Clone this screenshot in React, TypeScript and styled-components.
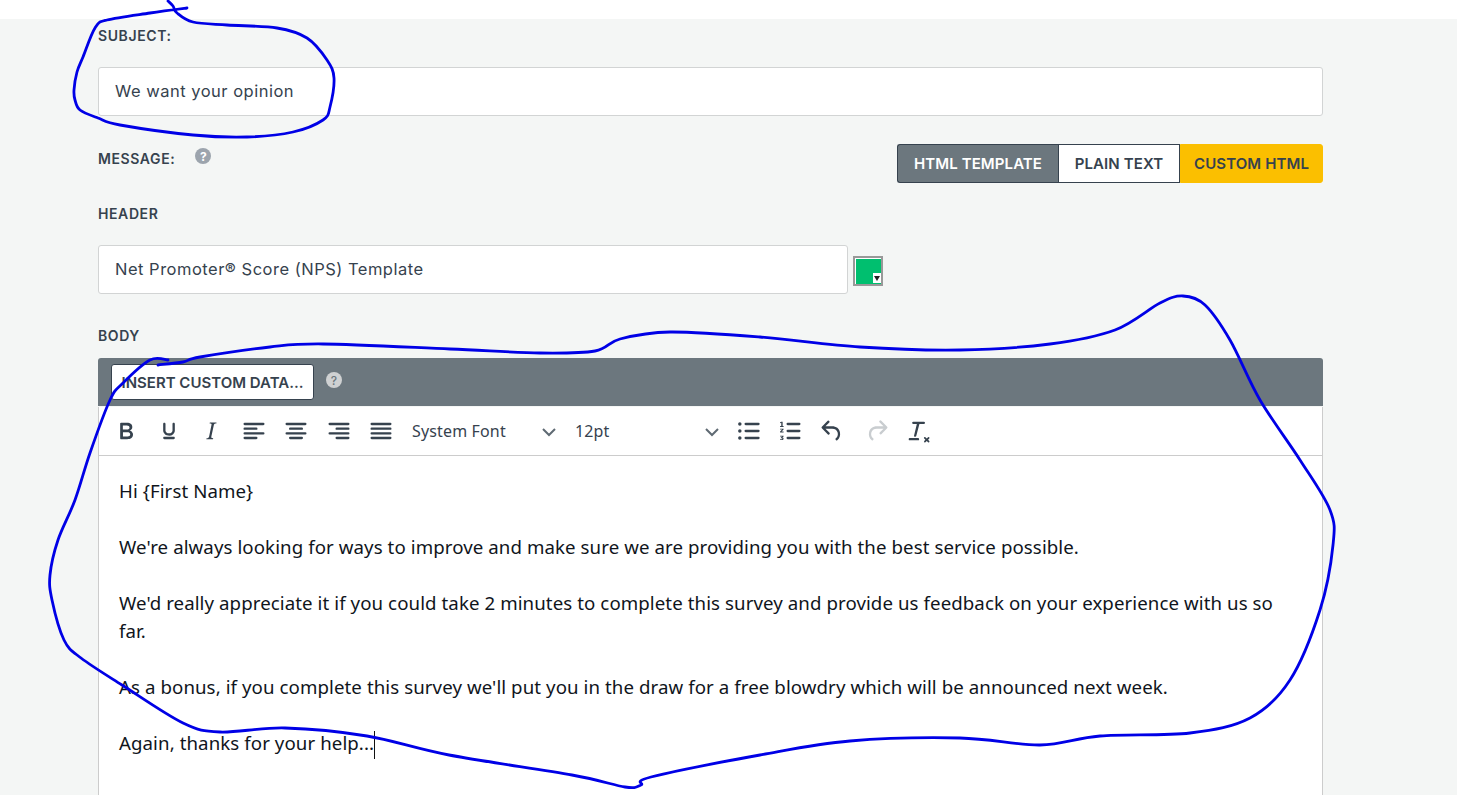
import React from 'react';
import styled, { createGlobalStyle } from 'styled-components';

const GlobalStyle = createGlobalStyle`
    html, body {
        margin: 0;
        padding: 0;
        height: 795px;
        overflow: hidden;
        background-color: #fff;
    }
`
const uiFont = `Inter, "Noto Sans", sans-serif`;
const bodyFont = `"Noto Sans", "Open Sans", sans-serif`;

const Root = styled.div`
    position: relative;
    height: 795px;
    overflow: hidden;
`
const TopStrip = styled.div`
    height: 19px;
    background-color: #fff;
`
const Page = styled.div`
    height: 776px;
    overflow: hidden;
    box-sizing: border-box;
    padding: 0 134px 0 98px;
    background-color: #f4f6f5;
    font-family: ${uiFont};
    color: #36424e;
`
const Label = styled.div<{ $top: number }>`
    display: flex;
    align-items: center;
    height: 16px;
    margin-top: ${p => p.$top}px;
    font-size: 14px;
    font-weight: 600;
    letter-spacing: 0.6px;
    line-height: 16px;
`
const TextInput = styled.div<{ $width?: number }>`
    box-sizing: border-box;
    display: flex;
    align-items: center;
    width: ${p => (p.$width ? `${p.$width}px` : '100%')};
    height: 49px;
    padding: 0 16px 2px;
    background-color: #fff;
    border: 1px solid #d2d4d4;
    border-radius: 3px;
    font-size: 16.5px;
    letter-spacing: 0.5px;
`
const SubjectField = styled.div`
    margin-top: 23px;
`
const MessageRow = styled.div`
    display: flex;
    justify-content: space-between;
    margin-top: 28px;
    height: 39px;
`
const MessageLabel = styled.div`
    display: flex;
    height: 28px;
    align-items: center;
    gap: 20px;
    font-size: 14px;
    font-weight: 600;
    letter-spacing: 0.6px;
`
const Help = styled.span<{ $light?: boolean }>`
    display: inline-flex;
    align-items: center;
    justify-content: center;
    width: 16px;
    height: 16px;
    border-radius: 50%;
    font-size: 12px;
    font-weight: ${p => (p.$light ? 500 : 700)};
    letter-spacing: 0;
    background-color: ${p => (p.$light ? '#cfd1d2' : '#9ca4ad')};
    color: ${p => (p.$light ? '#6c777e' : '#fff')};
    position: relative;
    top: -2px;
`
const Segments = styled.div`
    display: flex;
    height: 39px;
    font-size: 15px;
    font-weight: 600;
    letter-spacing: 0.1px;
`
const Segment = styled.div<{ $kind: 'active' | 'plain' | 'custom' }>`
    box-sizing: border-box;
    display: flex;
    align-items: center;
    justify-content: center;
    height: 39px;
    width: ${p => (p.$kind === 'active' ? 161 : p.$kind === 'plain' ? 122 : 143)}px;
    border: 1px solid ${p => (p.$kind === 'custom' ? '#fbbf00' : '#36424e')};
    border-right-width: ${p => (p.$kind === 'active' ? 0 : 1)}px;
    background-color: ${p => (p.$kind === 'active' ? '#6c777e' : p.$kind === 'plain' ? '#fff' : '#fbbf00')};
    color: ${p => (p.$kind === 'active' ? '#fff' : '#36424e')};
    border-radius: ${p => (p.$kind === 'active' ? '3px 0 0 3px' : p.$kind === 'custom' ? '0 3px 3px 0' : '0')};
`
const HeaderField = styled.div`
    display: flex;
    align-items: center;
    gap: 5px;
    margin-top: 23px;
`
const Swatch = styled.div`
    position: relative;
    box-sizing: border-box;
    width: 30px;
    height: 30px;
    margin-top: 3px;
    padding: 1px 0 1px 1px;
    border: 2px solid #999;
    background-color: #fff;
`
const SwatchFill = styled.div`
    width: 25px;
    height: 25px;
    background-color: #00bf6f;
`
const SwatchCorner = styled.div`
    position: absolute;
    right: 0;
    bottom: 1px;
    width: 8px;
    height: 10px;
    background-color: #fff;
    &::after {
        content: '';
        position: absolute;
        left: 1px;
        top: 3px;
        border-left: 3px solid transparent;
        border-right: 3px solid transparent;
        border-top: 5px solid #222;
    }
`
const EditorBar = styled.div`
    display: flex;
    align-items: center;
    gap: 12px;
    height: 48px;
    margin-top: 14px;
    padding-left: 13px;
    background-color: #6c777e;
    border-radius: 3px 3px 0 0;
`
const InsertButton = styled.div`
    box-sizing: border-box;
    display: flex;
    align-items: center;
    justify-content: center;
    width: 203px;
    height: 36px;
    background-color: #fff;
    border: 1px solid #36424e;
    border-radius: 3px;
    font-size: 15px;
    font-weight: 600;
`
const Editor = styled.div`
    height: 389px;
    margin-top: 1px;
    background-color: #fff;
    border: 1px solid #ccc;
    border-top: 0;
    border-bottom: 0;
`
const Toolbar = styled.div`
    display: flex;
    align-items: center;
    height: 48px;
    padding-left: 13px;
    border-bottom: 1px solid #ccc;
`
const ToolIcon = styled.svg<{ $muted?: boolean; $gap?: number }>`
    flex: none;
    width: 28px;
    height: 28px;
    margin-right: ${p => p.$gap ?? 14.5}px;
    fill: ${p => (p.$muted ? '#c9cdd0' : '#36424e')};
`
const Select = styled.div<{ $width: number; $pad: number }>`
    flex: none;
    display: flex;
    align-items: center;
    justify-content: space-between;
    box-sizing: border-box;
    width: ${p => p.$width}px;
    padding-right: ${p => p.$pad}px;
    font-family: ${bodyFont};
    font-size: 16px;
    letter-spacing: 0.15px;
    color: #36424e;
`
const Chevron = styled.svg`
    width: 14px;
    height: 10px;
    margin-top: 1px;
    fill: none;
    stroke: #5f6a73;
    stroke-width: 2;
`
const Content = styled.div`
    padding: 21px 25px 0 20px;
    font-family: ${bodyFont};
    font-size: 18.67px;
    letter-spacing: 0.085px;
    line-height: 28px;
    color: #10151c;
`
const Para = styled.p`
    margin: 0 0 28px;
`
const Caret = styled.span`
    display: inline-block;
    width: 1px;
    height: 28px;
    margin-bottom: -9px;
    background-color: #111;
`
const Scribble = styled.svg`
    position: absolute;
    top: 0;
    left: 0;
    width: 1457px;
    height: 795px;
    pointer-events: none;
    fill: none;
    stroke: #0000e6;
    stroke-width: 2.8;
    stroke-linecap: round;
    stroke-linejoin: round;
`

const icons: { [key: string]: string } = {
    bold: 'M7.8 19c-.3 0-.5 0-.6-.2l-.2-.5V5.7c0-.2 0-.4.2-.5l.6-.2h5c1.5 0 2.7.3 3.5 1 .7.6 1.1 1.4 1.1 2.5a3 3 0 0 1-.6 1.9c-.4.6-1 1-1.6 1.2.4.1.9.3 1.3.6s.8.7 1 1.2c.4.4.5 1 .5 1.6 0 1.3-.4 2.3-1.3 3-.8.7-2.1 1-3.8 1H7.8zm5-8.3c.6 0 1.2-.1 1.6-.5.4-.3.6-.7.6-1.3 0-1.1-.8-1.7-2.3-1.7H9.3v3.5h3.4zm.5 6c.7 0 1.3-.1 1.7-.4.4-.4.6-.9.6-1.5s-.2-1-.7-1.4c-.4-.3-1-.4-2-.4H9.4v3.8h4z',
    underline: 'M16 5c.6 0 1 .4 1 1v5.5a4 4 0 0 1-.4 1.8l-1 1.4a5.3 5.3 0 0 1-5.5 1 5 5 0 0 1-1.6-1c-.5-.4-.8-.9-1.1-1.4a4 4 0 0 1-.4-1.8V6c0-.6.4-1 1-1s1 .4 1 1v5.5c0 .3 0 .6.2 1l.6.7a3.3 3.3 0 0 0 2.2.8 3.4 3.4 0 0 0 2.2-.8c.3-.2.4-.5.6-.8l.2-.9V6c0-.6.4-1 1-1zM8 17h8c.6 0 1 .4 1 1s-.4 1-1 1H8a1 1 0 0 1-1-1c0-.6.4-1 1-1z',
    italic: 'M16.7 4.7l-.1.9h-.3c-.6 0-1 0-1.4.3-.3.3-.4.6-.5 1.1l-2.1 9.8v.6c0 .5.4.8 1.4.8h.2l-.2.8H8l.2-.8h.2c1.1 0 1.8-.5 2-1.5l2-9.8.1-.5c0-.6-.4-.8-1.4-.8h-.3l.2-.9h5.8z',
    left: 'M4 5h16a1 1 0 0 1 0 2H4a1 1 0 1 1 0-2zm0 4h10a1 1 0 0 1 0 2H4a1 1 0 1 1 0-2zm0 8h10a1 1 0 0 1 0 2H4a1 1 0 0 1 0-2zm0-4h16a1 1 0 0 1 0 2H4a1 1 0 0 1 0-2z',
    center: 'M4 5h16a1 1 0 0 1 0 2H4a1 1 0 1 1 0-2zm3 4h10a1 1 0 0 1 0 2H7a1 1 0 1 1 0-2zm0 8h10a1 1 0 0 1 0 2H7a1 1 0 0 1 0-2zm-3-4h16a1 1 0 0 1 0 2H4a1 1 0 0 1 0-2z',
    right: 'M4 5h16a1 1 0 0 1 0 2H4a1 1 0 1 1 0-2zm6 4h10a1 1 0 0 1 0 2H10a1 1 0 0 1 0-2zm0 8h10a1 1 0 0 1 0 2H10a1 1 0 0 1 0-2zm-6-4h16a1 1 0 0 1 0 2H4a1 1 0 0 1 0-2z',
    justify: 'M4 5h16a1 1 0 0 1 0 2H4a1 1 0 1 1 0-2zm0 4h16a1 1 0 0 1 0 2H4a1 1 0 1 1 0-2zm0 4h16a1 1 0 0 1 0 2H4a1 1 0 0 1 0-2zm0 4h16a1 1 0 0 1 0 2H4a1 1 0 0 1 0-2z',
    bullets: 'M10 5h11a1 1 0 0 1 0 2H10a1 1 0 0 1 0-2zm0 6h11a1 1 0 0 1 0 2H10a1 1 0 0 1 0-2zm0 6h11a1 1 0 0 1 0 2H10a1 1 0 0 1 0-2zM5 4.5a1.5 1.5 0 1 1 0 3 1.5 1.5 0 0 1 0-3zm0 6a1.5 1.5 0 1 1 0 3 1.5 1.5 0 0 1 0-3zm0 6a1.5 1.5 0 1 1 0 3 1.5 1.5 0 0 1 0-3z',
    numbers: 'M10 5h10a1 1 0 0 1 0 2H10a1 1 0 0 1 0-2zm0 6h10a1 1 0 0 1 0 2H10a1 1 0 0 1 0-2zm0 6h10a1 1 0 0 1 0 2H10a1 1 0 0 1 0-2zM4.5 4h1.2v3.8h.8v.7h-3v-.7h1V5l-1 .3v-.7l1-.6zm-1 6h3v.8l-1.7 1.7h1.7v.7h-3v-.7l1.8-1.8H3.5V10zm0 6h3v.7l-1 .9c.6.1 1 .4 1 1 0 .8-.6 1.2-1.5 1.2H3.5v-.7h1.4c.4 0 .6-.2.6-.4s-.2-.4-.6-.4h-.8v-.6l1-.9H3.5V16z',
    undo: 'M6.4 8H12c3.7 0 6.2 2 6.8 5.1.6 2.7-.4 5.6-2.3 6.8a1 1 0 0 1-1-1.8c1.1-.7 1.8-2.7 1.4-4.6-.5-2.1-2.1-3.5-4.9-3.5H6.4l3.3 3.3a1 1 0 1 1-1.4 1.4l-5-5a1 1 0 0 1 0-1.4l5-5a1 1 0 0 1 1.4 1.4L6.4 8z',
    redo: 'M17.6 10H12c-2.8 0-4.4 1.4-4.9 3.5-.4 2 .3 3.9 1.4 4.6a1 1 0 1 1-1 1.8c-2-1.2-2.9-4.1-2.3-6.8.6-3 3-5.1 6.8-5.1h5.6l-3.3-3.3a1 1 0 1 1 1.4-1.4l5 5a1 1 0 0 1 0 1.4l-5 5a1 1 0 0 1-1.4-1.4l3.3-3.3z',
    clear: 'M13.2 6l-2.7 10.3a.9.9 0 0 1-1 .7h-.2a.8.8 0 0 1-.7-1L11 6H8a1 1 0 1 1 0-2h9a1 1 0 0 1 0 2h-3.8zM5 18h7a1 1 0 0 1 0 2H5a1 1 0 0 1 0-2zm12.3-.7a.8.8 0 0 1 1.1 0l1.1 1.1 1.1-1.1a.8.8 0 0 1 1.1 1.1l-1.1 1.1 1.1 1.1a.8.8 0 0 1-1.1 1.1l-1.1-1.1-1.1 1.1a.8.8 0 0 1-1.1-1.1l1.1-1.1-1.1-1.1a.8.8 0 0 1 0-1.1z',
}

const Tool = ({ name, muted, gap }: { name: string; muted?: boolean; gap?: number }) => (
    <ToolIcon viewBox="0 0 24 24" $muted={muted} $gap={gap}><path d={icons[name]} /></ToolIcon>
)

// smooth a hand-traced list of points into a bezier path
const smooth = (pts: number[][]) => {
    let d = `M${pts[0][0]} ${pts[0][1]}`;
    for (let i = 0; i < pts.length - 1; i++) {
        const p0 = pts[i - 1] || pts[i];
        const p1 = pts[i];
        const p2 = pts[i + 1];
        const p3 = pts[i + 2] || p2;
        const c1x = p1[0] + (p2[0] - p0[0]) / 6;
        const c1y = p1[1] + (p2[1] - p0[1]) / 6;
        const c2x = p2[0] - (p3[0] - p1[0]) / 6;
        const c2y = p2[1] - (p3[1] - p1[1]) / 6;
        d += ` C${c1x.toFixed(1)} ${c1y.toFixed(1)} ${c2x.toFixed(1)} ${c2y.toFixed(1)} ${p2[0]} ${p2[1]}`;
    }
    return d;
}

const subjectLoop = [
    [168, 1], [173, 6], [177, 13], [193, 22], [227, 25], [277, 28], [307, 38], [327, 60], [334, 78], [330, 107],
    [323, 120], [293, 132], [247, 137], [193, 135], [120, 125], [98, 118], [80, 110], [75, 100], [74, 90], [77, 72],
    [83, 57], [95, 28], [107, 20], [150, 13], [187, 8],
];
const bodyLoop = [
    [158, 365], [183, 362], [200, 357], [270, 347], [323, 344], [450, 349], [540, 353], [595, 351], [620, 339], [670, 332],
    [760, 337], [860, 347], [960, 350], [1050, 344], [1115, 330], [1160, 303], [1183, 296], [1205, 305], [1230, 340],
    [1260, 400], [1300, 460], [1330, 510], [1333, 545], [1320, 610], [1290, 680], [1250, 718], [1190, 733], [1100, 736],
    [1040, 745], [960, 738], [850, 741], [760, 755], [651, 777], [641, 785], [625, 787], [572, 775], [449, 755],
    [367, 736], [285, 728], [220, 732], [183, 723], [122, 685], [81, 658], [64, 640], [52, 600], [50, 575], [58, 540],
    [75, 500], [90, 453], [110, 400], [123, 383], [150, 360], [168, 360],
];

const App = () => {
    return (
        <Root>
            <GlobalStyle />
            <TopStrip />
            <Page>
                <Label $top={9}>SUBJECT:</Label>
                <SubjectField>
                    <TextInput>We want your opinion</TextInput>
                </SubjectField>
                <MessageRow>
                    <MessageLabel>MESSAGE: <Help>?</Help></MessageLabel>
                    <Segments>
                        <Segment $kind="active">HTML TEMPLATE</Segment>
                        <Segment $kind="plain">PLAIN TEXT</Segment>
                        <Segment $kind="custom">CUSTOM HTML</Segment>
                    </Segments>
                </MessageRow>
                <Label $top={23}>HEADER</Label>
                <HeaderField>
                    <TextInput $width={750}>Net Promoter® Score (NPS) Template</TextInput>
                    <Swatch>
                        <SwatchFill />
                        <SwatchCorner />
                    </Swatch>
                </HeaderField>
                <Label $top={34}>BODY</Label>
                <EditorBar>
                    <InsertButton>INSERT CUSTOM DATA...</InsertButton>
                    <Help $light>?</Help>
                </EditorBar>
                <Editor>
                    <Toolbar>
                        <Tool name="bold" />
                        <Tool name="underline" />
                        <Tool name="italic" />
                        <Tool name="left" />
                        <Tool name="center" />
                        <Tool name="right" />
                        <Tool name="justify" gap={17} />
                        <Select $width={163} $pad={19}>
                            System Font
                            <Chevron viewBox="0 0 14 10"><path d="M1 2l6 6 6-6" /></Chevron>
                        </Select>
                        <Select $width={159} $pad={15}>
                            12pt
                            <Chevron viewBox="0 0 14 10"><path d="M1 2l6 6 6-6" /></Chevron>
                        </Select>
                        <Tool name="bullets" gap={14} />
                        <Tool name="numbers" gap={14} />
                        <Tool name="undo" gap={17} />
                        <Tool name="redo" muted gap={13} />
                        <Tool name="clear" />
                    </Toolbar>
                    <Content>
                        <Para>Hi {'{First Name}'}</Para>
                        <Para>We're always looking for ways to improve and make sure we are providing you with the best service possible.</Para>
                        <Para>We'd really appreciate it if you could take 2 minutes to complete this survey and provide us feedback on your experience with us so far.</Para>
                        <Para>As a bonus, if you complete this survey we'll put you in the draw for a free blowdry which will be announced next week.</Para>
                        <Para>Again, thanks for your help...<Caret /></Para>
                    </Content>
                </Editor>
            </Page>
            <Scribble viewBox="0 0 1457 795">
                <path d={smooth(subjectLoop)} />
                <path d={smooth(bodyLoop)} />
            </Scribble>
        </Root>
    )
}

export default App
